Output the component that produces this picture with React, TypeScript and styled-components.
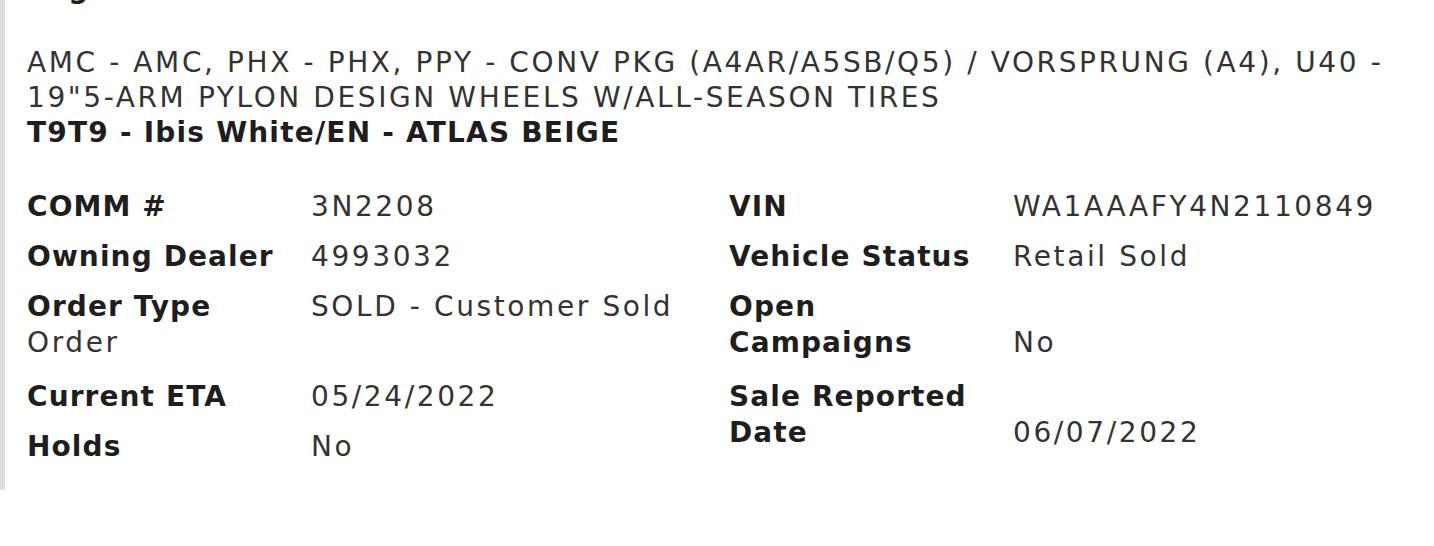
import styled, { createGlobalStyle } from "styled-components";

const GlobalStyle = createGlobalStyle`
  body {
    margin: 0;
    background: #ffffff;
    font-family: "DejaVu Sans", "Noto Sans", sans-serif;
    color: #333333;
  }
`;

const Panel = styled.section`
  border-left: 5px solid #dedede;
  padding: 0 8px 11px 22px;
  font-size: 28px;
  line-height: 35px;
`;

const Heading = styled.h3`
  margin: -29px 0 0;
  font-size: 28px;
  line-height: 35px;
  font-weight: bold;
  letter-spacing: 1.1px;
  color: #1e1e1e;
`;

const Description = styled.p`
  margin: 39px 0 0;
  letter-spacing: 2.6px;
`;

const Color = styled.div`
  font-weight: bold;
  letter-spacing: 1.2px;
  color: #1e1e1e;
`;

const Grid = styled.div`
  display: grid;
  grid-template-columns: repeat(2, 702px);
  margin-top: 39px;
`;

const Column = styled.div`
  display: flex;
  flex-direction: column;
`;

const Row = styled.div<{ $tall?: boolean }>`
  line-height: 36px;
  margin-bottom: ${(p) => (p.$tall ? "18px" : "14px")};
`;

const Label = styled.span`
  display: inline-block;
  width: 284px;
  padding-right: 18px;
  box-sizing: border-box;
  font-weight: bold;
  letter-spacing: 1.1px;
  color: #1e1e1e;
`;

const Value = styled.span`
  letter-spacing: 2.6px;
`;

type Field = { label: string; value: string; tall?: boolean };

const left: Field[] = [
  { label: "COMM #", value: "3N2208" },
  { label: "Owning Dealer", value: "4993032" },
  { label: "Order Type", value: "SOLD - Customer Sold Order", tall: true },
  { label: "Current ETA", value: "05/24/2022" },
  { label: "Holds", value: "No" },
];

const right: Field[] = [
  { label: "VIN", value: "WA1AAAFY4N2110849" },
  { label: "Vehicle Status", value: "Retail Sold" },
  { label: "Open Campaigns", value: "No", tall: true },
  { label: "Sale Reported Date", value: "06/07/2022", tall: true },
];

function FieldList({ fields }: { fields: Field[] }) {
  return (
    <Column>
      {fields.map((f) => (
        <Row key={f.label} $tall={f.tall}>
          <Label>{f.label}</Label>
          <Value>{f.value}</Value>
        </Row>
      ))}
    </Column>
  );
}

function App() {
  return (
    <>
      <GlobalStyle />
      <Panel>
        <Heading>Pkg</Heading>
        <Description>
          AMC - AMC, PHX - PHX, PPY - CONV PKG (A4AR/A5SB/Q5) / VORSPRUNG (A4), U40 - 19"5-ARM PYLON DESIGN WHEELS W/ALL-SEASON TIRES
        </Description>
        <Color>T9T9 - Ibis White/EN - ATLAS BEIGE</Color>
        <Grid>
          <FieldList fields={left} />
          <FieldList fields={right} />
        </Grid>
      </Panel>
    </>
  );
}

export default App;
